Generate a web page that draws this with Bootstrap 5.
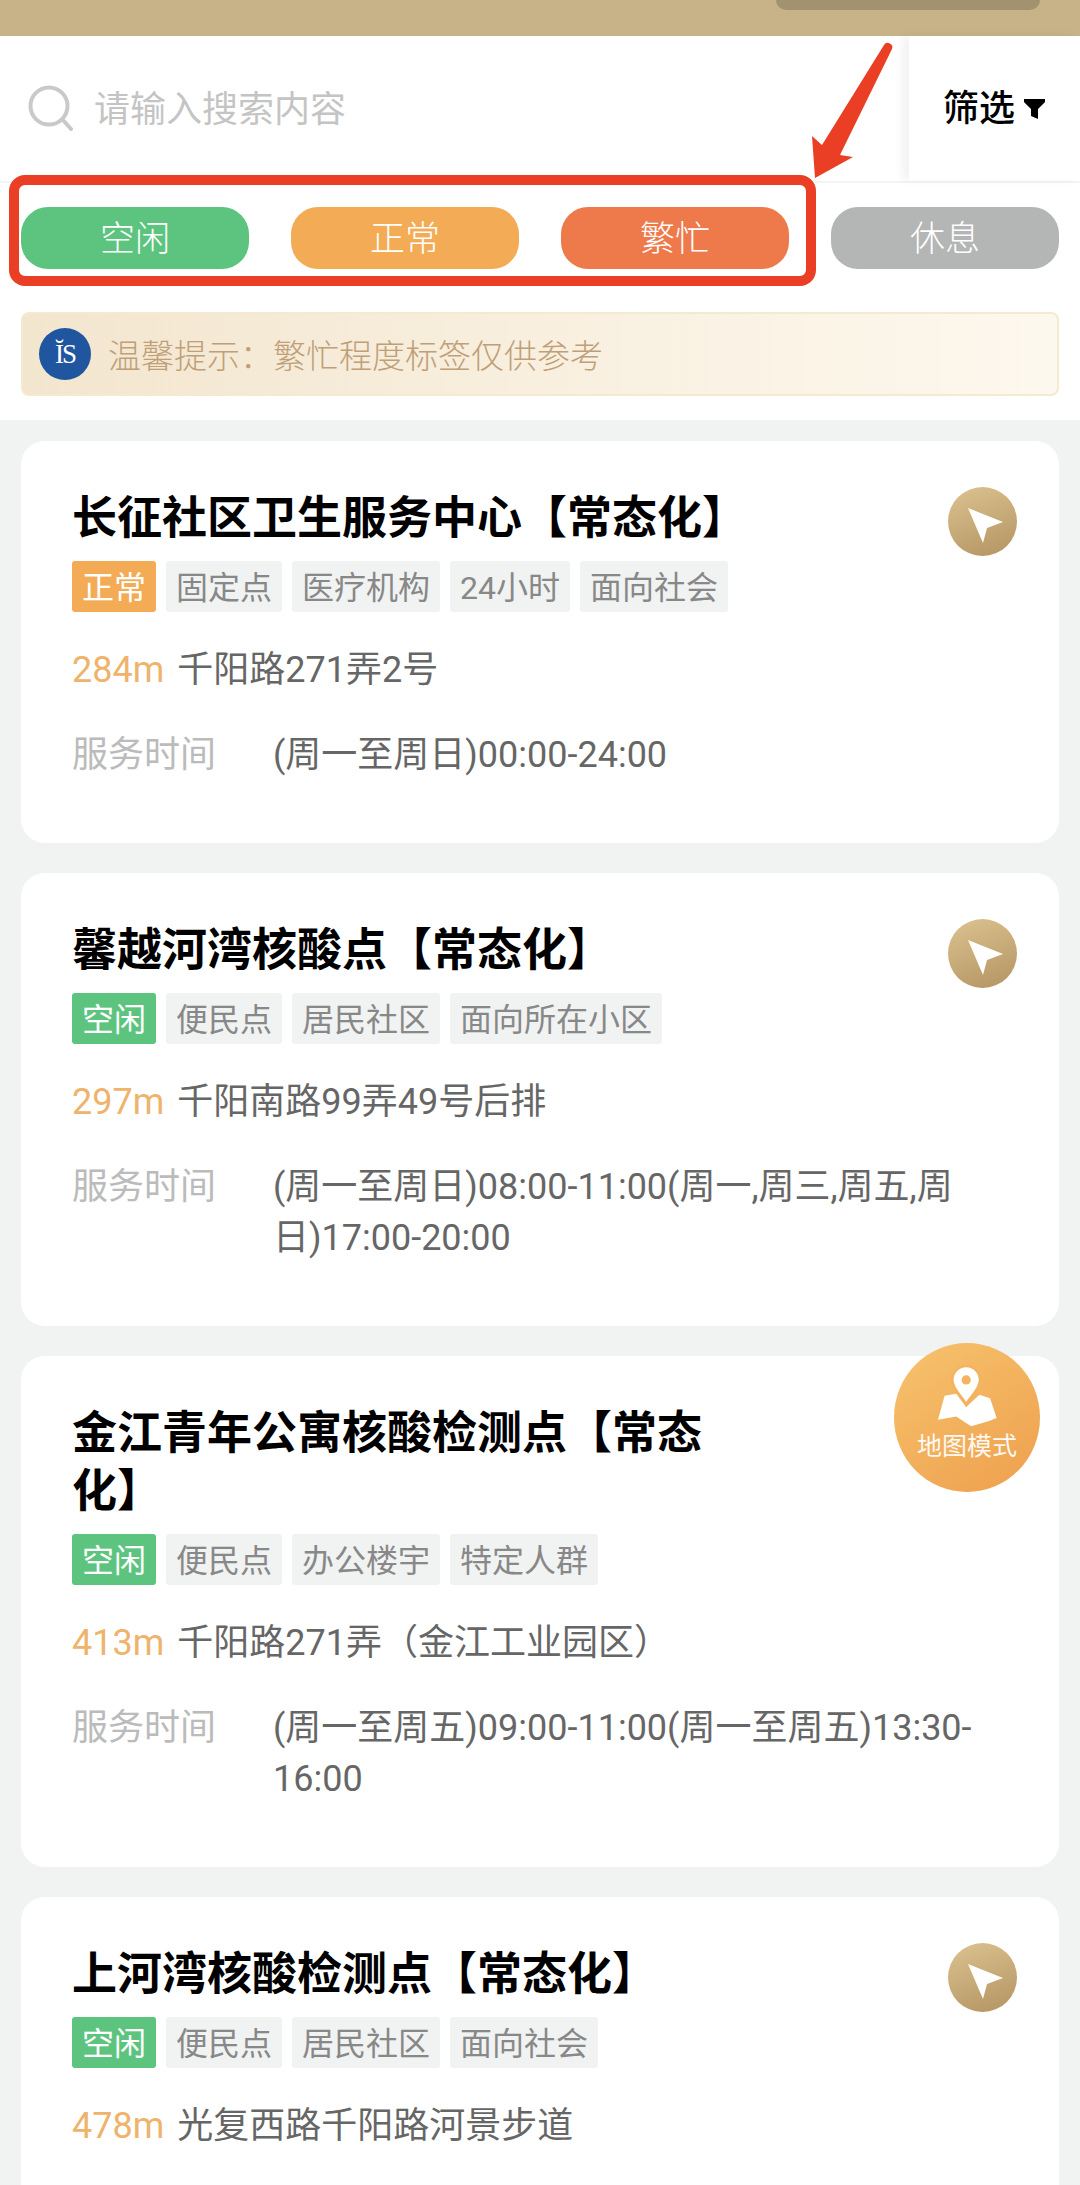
<!DOCTYPE html>
<html lang="zh-CN">
<head>
    <meta charset="UTF-8">
    <meta name="viewport" content="width=device-width, initial-scale=1.0">
    <title>核酸检测点</title>
    <link rel="stylesheet" href="https://cdn.jsdelivr.net/npm/bootstrap@5.3.0/dist/css/bootstrap.min.css">
    <style>
        body { background: #f1f3f3; font-family: Roboto, "Noto Sans CJK SC", sans-serif; }
        .page-wrap { width: 1080px; height: 2185px; overflow: hidden; position: relative; }
        .top-bar { height: 36px; background: #c8b388; padding-right: 40px; }
        .top-handle { width: 264px; height: 10px; background: #a39270; border-radius: 0 0 30px 30px; }
        .search-row { height: 147px; background: #fff; border-bottom: 2px solid #f3f4f4; }
        .search-hint { color: #c4c4c4; font-size: 36px; line-height: 1; padding-left: 20px; padding-top: 2px; }
        .search-ico { margin-left: 28px; margin-bottom: 2px; }
        .filter-box { width: 171px; height: 144px; background: #fff; box-shadow: -7px 0 9px rgba(0, 0, 0, .05); font-size: 36px; font-weight: 500; color: #000; padding-left: 34px; padding-top: 2px; }
        .filter-box svg { margin-left: 9px; }
        .head-area { background: #fff; padding: 24px 21px 24px; }
        .state-pill { width: 228px; height: 62px; padding-top: 5px; border-radius: 27px; color: #fff; font-size: 35px; font-weight: 300; }
        .pill-free { background: #5cc47f; }
        .pill-normal { background: #f3ab55; }
        .pill-busy { background: #ee7a4b; }
        .pill-rest { background: #b4b5b5; }
        .tip-box { height: 84px; margin-top: 43px; padding-left: 16px; border: 2px solid #f5e9d0; border-radius: 8px; background: linear-gradient(90deg, #f3e6cf, #fdf8ee); color: #c09f78; font-size: 33px; font-weight: 300; }
        .tip-box span { padding-top: 5px; }
        .tip-logo { width: 52px; height: 52px; border-radius: 50%; background: #1f569f; color: #fff; font-family: "Liberation Serif", serif; font-size: 27px; line-height: 1; margin-right: 17px; letter-spacing: -2px; }
        .list-area { padding: 21px 21px 0; }
        .site-card { border: 0; border-radius: 24px; background: #fff; margin-bottom: 30px; padding: 45px 42px 62px 51px; }
        .site-head { width: 690px; }
        .site-title { font-family: "Noto Sans CJK SC", sans-serif; font-size: 45px; line-height: 58px; font-weight: 700; color: #000; margin: 0; }
        .tag-row { gap: 10px; margin-top: 17px; }
        .site-tag { height: 51px; padding: 3px 10px 0; border-radius: 3px; background: #f1f2f2; color: #888; font-size: 32px; font-weight: 400; }
        .tag-free { background: #5cc47f; color: #fff; }
        .tag-normal { background: #f3ab55; color: #fff; }
        .nav-btn { width: 69px; height: 69px; border-radius: 50%; background: linear-gradient(160deg, #dcc391, #b39362); flex: none; margin-top: 1px; }
        .addr-row { margin-top: 33px; font-size: 36px; line-height: 51px; color: #666; font-weight: 400; }
        .addr-dist { color: #eeb36c; margin-right: 13px; }
        .time-row { margin-top: 34px; font-size: 36px; line-height: 51px; font-weight: 400; color: #666; padding-right: 40px; }
        .time-label { width: 201px; flex: none; color: #bbb; }
        .map-fab { position: absolute; left: 894px; top: 1343px; width: 146px; height: 149px; border-radius: 50%; background: linear-gradient(145deg, #f7c36d, #ee9f4d); color: #fff; font-size: 25px; font-weight: 400; padding-top: 22px; }
        .map-fab span { line-height: 1; margin-top: 6px; opacity: .92; }
        .mark-box { position: absolute; left: 9px; top: 175px; width: 807px; height: 111px; border: 10px solid #ea3f24; border-radius: 16px; }
        .mark-arrow { position: absolute; left: 800px; top: 36px; }
    </style>
</head>
<body>

<div class="page-wrap">
    <div class="top-bar d-flex justify-content-end">
        <div class="top-handle"></div>
    </div>

    <!-- search + filter -->
    <div class="search-row d-flex justify-content-between align-items-start">
        <div class="d-flex align-items-center h-100">
            <svg class="search-ico" width="46" height="46" viewBox="0 0 46 46" fill="none" stroke="#c9c9c9" stroke-width="4" stroke-linecap="round"><circle cx="21" cy="21" r="18.5"/><path d="M35 35l8 9"/></svg>
            <div class="search-hint">请输入搜索内容</div>
        </div>
        <div class="filter-box d-flex align-items-center">
            <span>筛选</span>
            <svg width="21" height="20" viewBox="0 0 21 20" fill="#000"><path d="M0 0h21v3l-7 7v10l-7-3v-7L0 3z"/></svg>
        </div>
    </div>

    <!-- status legend + tip -->
    <div class="head-area">
        <div class="d-flex justify-content-between">
            <div class="state-pill pill-free d-flex align-items-center justify-content-center">空闲</div>
            <div class="state-pill pill-normal d-flex align-items-center justify-content-center">正常</div>
            <div class="state-pill pill-busy d-flex align-items-center justify-content-center">繁忙</div>
            <div class="state-pill pill-rest d-flex align-items-center justify-content-center">休息</div>
        </div>
        <div class="tip-box d-flex align-items-center">
            <div class="tip-logo d-flex align-items-center justify-content-center">ĬS</div>
            <span>温馨提示：繁忙程度标签仅供参考</span>
        </div>
    </div>

    <div class="list-area">
        <div class="card site-card">
            <div class="d-flex justify-content-between align-items-start">
                <div class="site-head">
                    <h2 class="site-title">长征社区卫生服务中心【常态化】</h2>
                    <div class="tag-row d-flex">
                        <span class="site-tag tag-normal d-flex align-items-center">正常</span>
                        <span class="site-tag d-flex align-items-center">固定点</span>
                        <span class="site-tag d-flex align-items-center">医疗机构</span>
                        <span class="site-tag d-flex align-items-center">24小时</span>
                        <span class="site-tag d-flex align-items-center">面向社会</span>
                    </div>
                </div>
                <div class="nav-btn"><svg width="69" height="69" viewBox="0 0 69 69" fill="#fff"><path d="M20 21l35 14-16 6-4 15z"/></svg></div>
            </div>
            <div class="addr-row"><span class="addr-dist">284m</span>千阳路271弄2号</div>
            <div class="time-row d-flex"><div class="time-label">服务时间</div><div>(周一至周日)00:00-24:00</div></div>
        </div>

        <div class="card site-card">
            <div class="d-flex justify-content-between align-items-start">
                <div class="site-head">
                    <h2 class="site-title">馨越河湾核酸点【常态化】</h2>
                    <div class="tag-row d-flex">
                        <span class="site-tag tag-free d-flex align-items-center">空闲</span>
                        <span class="site-tag d-flex align-items-center">便民点</span>
                        <span class="site-tag d-flex align-items-center">居民社区</span>
                        <span class="site-tag d-flex align-items-center">面向所在小区</span>
                    </div>
                </div>
                <div class="nav-btn"><svg width="69" height="69" viewBox="0 0 69 69" fill="#fff"><path d="M20 21l35 14-16 6-4 15z"/></svg></div>
            </div>
            <div class="addr-row"><span class="addr-dist">297m</span>千阳南路99弄49号后排</div>
            <div class="time-row d-flex"><div class="time-label">服务时间</div><div>(周一至周日)08:00-11:00(周一,周三,周五,周日)17:00-20:00</div></div>
        </div>

        <div class="card site-card">
            <div class="d-flex justify-content-between align-items-start">
                <div class="site-head">
                    <h2 class="site-title">金江青年公寓核酸检测点【常态化】</h2>
                    <div class="tag-row d-flex">
                        <span class="site-tag tag-free d-flex align-items-center">空闲</span>
                        <span class="site-tag d-flex align-items-center">便民点</span>
                        <span class="site-tag d-flex align-items-center">办公楼宇</span>
                        <span class="site-tag d-flex align-items-center">特定人群</span>
                    </div>
                </div>
                <div class="nav-btn"><svg width="69" height="69" viewBox="0 0 69 69" fill="#fff"><path d="M20 21l35 14-16 6-4 15z"/></svg></div>
            </div>
            <div class="addr-row"><span class="addr-dist">413m</span>千阳路271弄（金江工业园区）</div>
            <div class="time-row d-flex"><div class="time-label">服务时间</div><div>(周一至周五)09:00-11:00(周一至周五)13:30-16:00</div></div>
        </div>

        <div class="card site-card">
            <div class="d-flex justify-content-between align-items-start">
                <div class="site-head">
                    <h2 class="site-title">上河湾核酸检测点【常态化】</h2>
                    <div class="tag-row d-flex">
                        <span class="site-tag tag-free d-flex align-items-center">空闲</span>
                        <span class="site-tag d-flex align-items-center">便民点</span>
                        <span class="site-tag d-flex align-items-center">居民社区</span>
                        <span class="site-tag d-flex align-items-center">面向社会</span>
                    </div>
                </div>
                <div class="nav-btn"><svg width="69" height="69" viewBox="0 0 69 69" fill="#fff"><path d="M20 21l35 14-16 6-4 15z"/></svg></div>
            </div>
            <div class="addr-row"><span class="addr-dist">478m</span>光复西路千阳路河景步道</div>
        </div>
    </div>

    <!-- floating map button -->
    <div class="map-fab d-flex flex-column align-items-center">
        <svg width="62" height="63" viewBox="230 135 185 190">
            <path fill="#fff" d="M255 228l35-6 30 40 40-37 32 10 20 60-25 10-52 15-45-30-55 10z"/>
            <path fill="#fff" stroke="#f4b35f" stroke-width="8" d="M320 138a42 42 0 0 1 42 42c0 28-30 50-42 74c-12-24-42-46-42-74a42 42 0 0 1 42-42z"/>
            <circle cx="320" cy="180" r="14" fill="#f4b35f"/>
        </svg>
        <span>地图模式</span>
    </div>

    <!-- red annotation drawn over the screenshot -->
    <div class="mark-box"></div>
    <svg class="mark-arrow" width="100" height="150" viewBox="800 36 100 150" fill="#ea3f24">
        <path d="M815 178l-3-42 10 9 62-100a4.500 4.500 0 0 1 8 4l-52 106 13 2z"/>
    </svg>
</div>

<script src="https://cdn.jsdelivr.net/npm/bootstrap@5.3.0/dist/js/bootstrap.bundle.min.js"></script>
</body>
</html>
